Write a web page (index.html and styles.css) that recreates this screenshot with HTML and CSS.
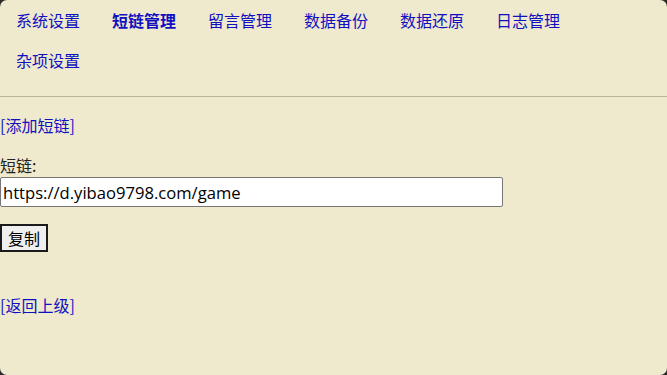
FILE: index.html
```html
<!DOCTYPE html>
<html lang="zh-CN">
<head>
<meta charset="utf-8">
<title>短链管理</title>
<link rel="stylesheet" href="styles.css">
</head>
<body>
<div class="page">
  <ul class="nav">
    <li><a href="#">系统设置</a></li>
    <li><a href="#" class="active">短链管理</a></li>
    <li><a href="#">留言管理</a></li>
    <li><a href="#">数据备份</a></li>
    <li><a href="#">数据还原</a></li>
    <li><a href="#">日志管理</a></li>
    <li><a href="#">杂项设置</a></li>
  </ul>
  <div class="content">
    <p class="add"><a href="#">[添加短链]</a></p>
    <div class="label">短链:</div>
    <input class="url" type="text" value="https://d.yibao9798.com/game">
    <div class="actions"><button class="copy" type="button">复制</button></div>
    <p class="back"><a href="#">[返回上级]</a></p>
  </div>
</div>
</body>
</html>
```

FILE: styles.css
```css
html {
  background: #2b2b2b;
  height: 100%;
}
body {
  margin: 0;
  height: 100%;
  font-family: "Noto Sans CJK SC", "Noto Sans", sans-serif;
  font-size: 16px;
  color: #222;
}
.page {
  height: 375px;
  box-sizing: border-box;
  background: #efe9ce;
  border-radius: 7px;
  overflow: hidden;
}
a {
  color: #1010c0;
  text-decoration: none;
}
.nav {
  list-style: none;
  margin: 0;
  padding: 0 0 16px;
  display: flex;
  flex-wrap: wrap;
  border-bottom: 1px solid #b9b49c;
}
.nav li {
  padding: 0 16px;
  line-height: 40px;
  height: 40px;
}
.nav a {
  font-size: 16px;
}
.nav a.active {
  font-weight: bold;
}
.content {
  padding-top: 16px;
}
.add, .back {
  margin: 0;
  line-height: 24px;
  height: 24px;
  font-size: 16px;
}
.label {
  margin-top: 16px;
  line-height: 24px;
  height: 24px;
  font-size: 16px;
}
.url {
  display: block;
  box-sizing: border-box;
  width: 503px;
  height: 30px;
  margin: 0;
  padding: 0 2px;
  border: 1px solid #767676;
  border-radius: 2px;
  background: #fff;
  font-family: "Open Sans", "Noto Sans", sans-serif;
  font-size: 16.6px;
  color: #000;
}
.actions {
  margin-top: 17px;
}
.copy {
  box-sizing: border-box;
  height: 28px;
  width: 48px;
  margin: 0;
  padding: 0;
  border: 2px solid #1a1a1a;
  background: #efefef;
  font-family: "Noto Sans CJK SC", sans-serif;
  font-size: 16px;
  color: #000;
}
.back {
  margin-top: 41px;
}
```
